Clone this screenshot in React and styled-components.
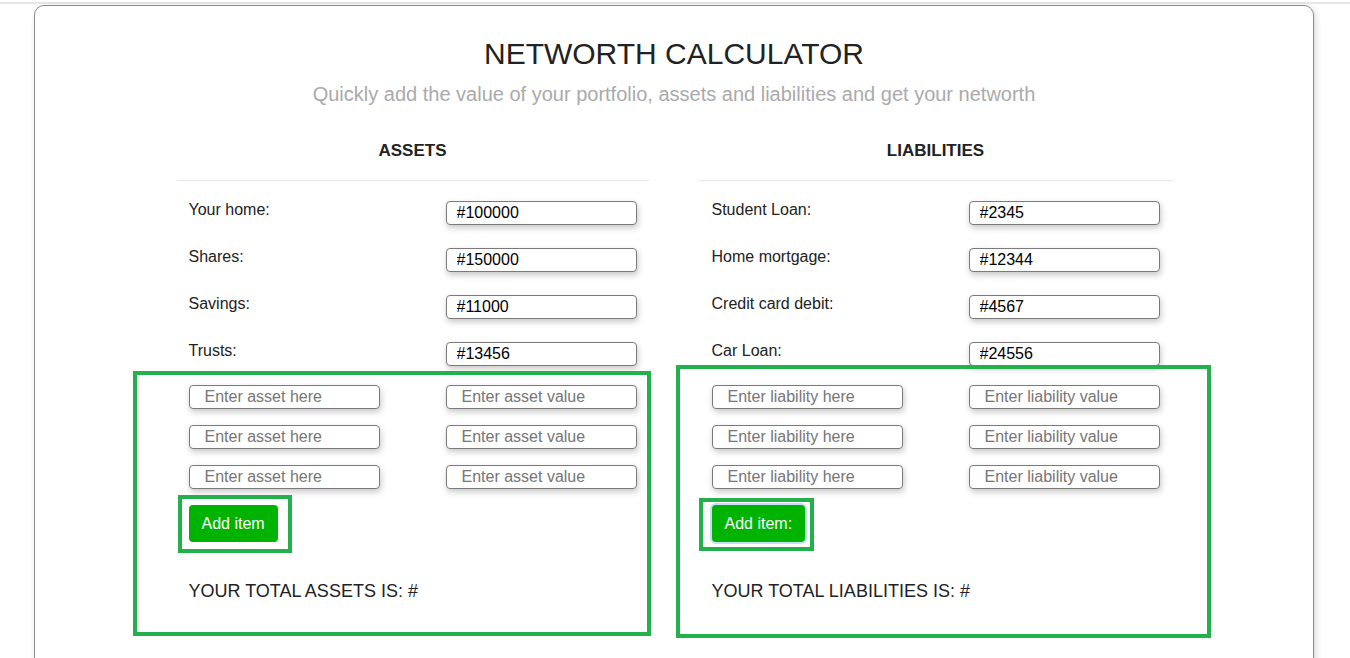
import React from 'react';
import styled, { createGlobalStyle } from 'styled-components';

const GlobalStyle = createGlobalStyle`
  body {
    margin: 0;
    background: #fff;
    font-family: "Liberation Sans", Arial, sans-serif;
    color: #222;
  }
`;

const Page = styled.div`
  position: relative;
  height: 658px;
  overflow: hidden;
`;

const TopLine = styled.div`
  height: 2px;
  margin-top: 2px;
  background: #e6e6e6;
`;

const Card = styled.main`
  margin: 1px 36px 0 34px;
  height: 720px;
  border: 1px solid #8a8a8a;
  border-radius: 10px;
  box-shadow: 2px 2px 6px rgba(0, 0, 0, 0.15);
  padding-top: 31px;
  box-sizing: border-box;
`;

const Title = styled.h1`
  margin: 0;
  text-align: center;
  font-size: 30px;
  line-height: 34px;
  font-weight: 400;
  color: #222;
`;

const Subtitle = styled.p`
  margin: 12px 0 0;
  text-align: center;
  font-size: 20px;
  line-height: 23px;
  color: #aaa;
`;

const Columns = styled.div`
  width: 995px;
  margin: 35px auto 0;
  display: grid;
  grid-template-columns: 472px 472px;
  column-gap: 51px;
`;

const Column = styled.section`
  display: flex;
  flex-direction: column;
`;

const ColumnTitle = styled.h2`
  margin: 0;
  padding-bottom: 19px;
  border-bottom: 1px solid #e5e5e5;
  text-align: center;
  font-size: 17px;
  line-height: 20px;
  font-weight: 700;
  color: #222;
`;

const Rows = styled.div`
  display: flex;
  flex-direction: column;
  gap: ${(p) => p.gap}px;
  margin-top: ${(p) => p.top}px;
  padding: 0 12px;
`;

const Row = styled.div`
  display: flex;
  justify-content: space-between;
  align-items: flex-start;
`;

const Label = styled.span`
  font-size: 16px;
  line-height: 18px;
  color: #222;
`;

const Field = styled.input`
  width: 191px;
  height: 24px;
  box-sizing: border-box;
  padding: 0 0 0 ${(p) => p.pad}px;
  border: 1px solid #7a7a7a;
  border-radius: 4px;
  box-shadow: 1px 3px 6px rgba(0, 0, 0, 0.22);
  font-family: "Liberation Sans", Arial, sans-serif;
  font-size: 16px;
  color: #000;
  background: #fff;
  outline: none;

  &::placeholder {
    color: #767676;
  }
`;

const AddButton = styled.button`
  align-self: flex-start;
  margin: 16px 0 0 12px;
  height: 37px;
  padding: 0 13px;
  border: none;
  border-radius: 4px;
  background: #00b300;
  color: #fff;
  font-family: "Liberation Sans", Arial, sans-serif;
  font-size: 16px;
  box-shadow: ${(p) => (p.focused ? '0 0 0 2px #c5def7' : 'none')};
`;

const Total = styled.p`
  margin: 39px 0 0 12px;
  font-size: 18px;
  line-height: 21px;
  color: #222;
`;

const Mark = styled.div`
  position: absolute;
  box-sizing: border-box;
  border: 4px solid #22b14c;
  pointer-events: none;
`;

const sections = [
  {
    title: 'ASSETS',
    items: [
      ['Your home:', '#100000'],
      ['Shares:', '#150000'],
      ['Savings:', '#11000'],
      ['Trusts:', '#13456'],
    ],
    name: 'Enter asset here',
    value: 'Enter asset value',
    button: 'Add item',
    total: 'YOUR TOTAL ASSETS IS: #',
  },
  {
    title: 'LIABILITIES',
    items: [
      ['Student Loan:', '#2345'],
      ['Home mortgage:', '#12344'],
      ['Credit card debit:', '#4567'],
      ['Car Loan:', '#24556'],
    ],
    name: 'Enter liability here',
    value: 'Enter liability value',
    button: 'Add item:',
    focused: true,
    total: 'YOUR TOTAL LIABILITIES IS: #',
  },
];

const marks = [
  { left: 133, top: 371, width: 518, height: 265 },
  { left: 676, top: 365, width: 535, height: 273 },
  { left: 178, top: 495, width: 114, height: 58 },
  { left: 699, top: 498, width: 115, height: 53 },
];

export default function App() {
  return (
    <Page>
      <GlobalStyle />
      <TopLine />
      <Card>
        <Title>NETWORTH CALCULATOR</Title>
        <Subtitle>Quickly add the value of your portfolio, assets and liabilities and get your networth</Subtitle>
        <Columns>
          {sections.map((s) => (
            <Column key={s.title}>
              <ColumnTitle>{s.title}</ColumnTitle>
              <Rows gap={23} top={20}>
                {s.items.map(([label, val]) => (
                  <Row key={label}>
                    <Label>{label}</Label>
                    <Field pad={10} defaultValue={val} />
                  </Row>
                ))}
              </Rows>
              <Rows gap={16} top={19}>
                {[0, 1, 2].map((i) => (
                  <Row key={i}>
                    <Field pad={15} placeholder={s.name} />
                    <Field pad={15} placeholder={s.value} />
                  </Row>
                ))}
              </Rows>
              <AddButton focused={s.focused}>{s.button}</AddButton>
              <Total>{s.total}</Total>
            </Column>
          ))}
        </Columns>
      </Card>
      {marks.map((m, i) => (
        <Mark key={i} style={{ left: m.left, top: m.top, width: m.width, height: m.height }} />
      ))}
    </Page>
  );
}
